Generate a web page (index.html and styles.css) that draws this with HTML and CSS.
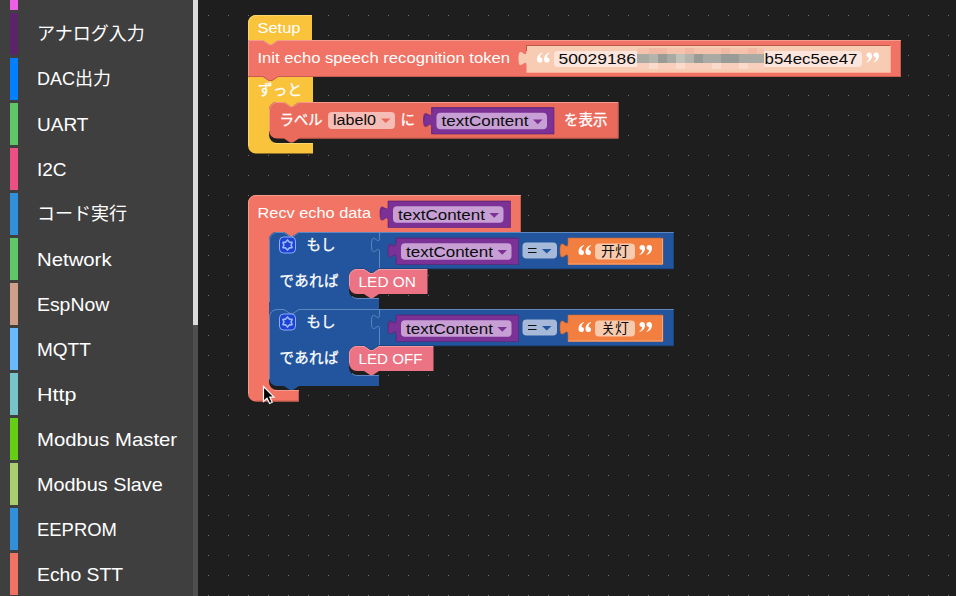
FILE: index.html
```
<!DOCTYPE html>
<html lang="ja">
<head>
<meta charset="utf-8">
<title>Blocks</title>
<link rel="stylesheet" href="styles.css">
</head>
<body>
<div class="app">
  <nav class="toolbox">
    <ul class="categories">
      <li class="cat orchid"></li>
      <li class="cat plum jp"><span>アナログ入力</span></li>
      <li class="cat azure jp"><span>DAC出力</span></li>
      <li class="cat green"><span>UART</span></li>
      <li class="cat rose"><span>I2C</span></li>
      <li class="cat blue jp"><span>コード実行</span></li>
      <li class="cat green wide"><span>Network</span></li>
      <li class="cat tan semi"><span>EspNow</span></li>
      <li class="cat sky"><span>MQTT</span></li>
      <li class="cat teal wider"><span>Http</span></li>
      <li class="cat lime wide"><span>Modbus Master</span></li>
      <li class="cat olive medium"><span>Modbus Slave</span></li>
      <li class="cat blue tight"><span>EEPROM</span></li>
      <li class="cat coral semi"><span>Echo STT</span></li>
    </ul>
    <div class="track"><div class="thumb"></div></div>
  </nav>
  <main class="workspace">
    <svg class="canvas" viewBox="198 0 758 596" width="758" height="596">
      <defs>
        <pattern id="grid" x="208" y="15" width="20" height="20" patternUnits="userSpaceOnUse"><rect width="1" height="1" fill="#707070"/></pattern>
        <g id="var">
          <path class="var-body" d="M0 0H122.500V26.500H0V20c0-10-8 8-8-7.500s8 2.500 8-7.500z"/>
          <path class="edge-light" d="M.5 26.500V20M-7.500 13c0-8 4-5 6-5.500M.5 5V.5H122"/>
          <rect class="var-field" x="5" y="5.300" width="110.500" height="16.500" rx="4"/>
          <text class="dark" x="10" y="18.700" textLength="87" lengthAdjust="spacingAndGlyphs">textContent</text>
          <path class="var-arrow" d="M101.500 12h9.500l-4.750 4.800z"/>
        </g>
        <path id="open-quote" d="M5.500 0C2.200 1 0 3.600 0 6.800 0 9 1.200 10 2.800 10 4.400 10 5.500 9 5.500 7.400 5.500 6 4.500 5 3 5 2.900 3.200 3.800 1.700 5.500.7zM12.500 0C9.200 1 7 3.600 7 6.800 7 9 8.200 10 9.800 10 11.400 10 12.500 9 12.500 7.400 12.500 6 11.500 5 10 5 9.900 3.200 10.800 1.700 12.500.7z"/>
        <g id="condition">
          <path class="if-body" d="M269 8a8 8 0 0 1 8-8H284l6 4h3l6-4H674V36.700H379l-6 4h-3l-6-4H357a8 8 0 0 0-8 8V58.500a8 8 0 0 0 8 8H379V77H299l-6 4h-3l-6-4H277a8 8 0 0 1-8-8z"/>
          <path class="if-light" d="M269.500 70V8a7.500 7.500 0 0 1 7.500-7.500H284l6 4h3l6-4H673.500M379.500 1V5.500c0 10-8-8-8 7.500s8-2.500 8 7.500V36M352 64.500a8 8 0 0 0 5 2H379"/>
          <path class="if-dark" d="M379 36.700H673.500V1"/>
          <rect x="279.500" y="5" width="16" height="16" rx="4" fill="#1d43d3" stroke="#8eadff"/>
          <path d="M287.500 7.900L289.300 10.100 292.100 10.400 291.100 13 292.100 15.600 289.300 15.900 287.500 18.100 285.700 15.900 282.900 15.600 283.900 13 282.900 10.400 285.700 10.100z" fill="none" stroke="#9db9f5" stroke-width="1.600" stroke-linejoin="round"/>
          <text class="label kana" x="306.500" y="18" textLength="29">もし</text>
          <text class="label kana" x="279.500" y="54" textLength="59">であれば</text>
          <use href="#var" x="396" y="6"/>
          <rect x="522.500" y="10.500" width="34.500" height="16" rx="4" fill="#a6b9d9"/>
          <path d="M528 16.500h8.500M528 20.500h8.500" stroke="#111" stroke-width="1.200"/>
          <path d="M542 17h9.500l-4.750 4.600z" fill="#22559d"/>
          <path class="string-body" d="M568 6H663V32.500H568V26c0-10-8 8-8-7.500s8 2.500 8-7.500z"/>
          <path d="M662.500 7V32H568" fill="none" stroke="#f5a77b"/>
          <use href="#open-quote" x="578.500" y="13" fill="#fff"/>
          <rect x="595" y="11.500" width="40" height="16" rx="4" fill="#f8caae"/>
          <use href="#open-quote" transform="translate(652 23) rotate(180)" fill="#fff"/>
        </g>
      </defs>
      <rect x="198" width="758" height="596" fill="url(#grid)"/>

      <g class="setup-stack">
        <path class="loop-body" d="M248 23a8 8 0 0 1 8-8H312V40L278 46H260L248 41z"/>
        <path class="loop-light" d="M248.500 40V23a7.500 7.500 0 0 1 7.500-7.500H311.500"/>
        <path class="loop-body" d="M248 77H313V102H299l-6 4h-3l-6-4H277a8 8 0 0 0-8 8V135a8 8 0 0 0 8 8H313V153.500H256a8 8 0 0 1-8-8z"/>
        <path class="loop-light" d="M248.500 78V146M274 143.500H312.500"/>
        <text class="label kana" x="258" y="94.500" textLength="44">ずっと</text>
        <path class="echo-body" d="M248 40H263l6 4h3l6-4H901V77H278l-6 4h-3l-6-4H248z"/>
        <path class="echo-light" d="M248.500 76V40.500H263l6 4h3l6-4H900.500"/>
        <path class="echo-dark" d="M248 76.500H263l6 4h3l6-4H900.500V41"/>
        <text class="label" x="257.500" y="33" textLength="43" lengthAdjust="spacingAndGlyphs">Setup</text>
        <text class="label" x="257.500" y="63.300" textLength="252.500" lengthAdjust="spacingAndGlyphs">Init echo speech recognition token</text>
        <path d="M526.500 45.500H890.500V72.500H526.500V66c0-10-8 8-8-7.500s8 2.500 8-7.500z" fill="#f8ccb3"/>
        <path d="M526.500 51V45.500H890" fill="none" stroke="#b8574b"/>
        <path d="M526.500 72.500H890.500V46" fill="none" stroke="#fbb09a"/>
        <rect x="554" y="51" width="308" height="16" rx="4" fill="#fbe5dc"/>
        <use href="#open-quote" x="537" y="52.500" fill="#fff"/>
        <use href="#open-quote" transform="translate(879 62.500) rotate(180)" fill="#fff"/>
        <text class="dark" x="558.500" y="64" textLength="77.500" lengthAdjust="spacingAndGlyphs">50029186</text>
        <g class="mosaic">
          <path d="M637 48h127v6H637z" fill="#f5c2ac"/><path d="M649 48h18v6h-18zM685 48h9v6h-9zM721 48h9v6h-9zM748 48h9v6h-9z" fill="#f1b9a4"/>
          <path d="M637 63h127v6H637z" fill="#f7cfbc"/><path d="M649 63h9v6h-9zM676 63h9v6h-9zM712 63h9v6h-9zM739 63h9v6h-9z" fill="#f9dacb"/>
          <path d="M637 54h127v9H637z" fill="#a9aaa4"/><path d="M658 54h9v9h-9zM694 54h9v9h-9zM721 54h18v9h-18z" fill="#999b96"/><path d="M676 54h9v9h-9z" fill="#c3c2ba"/><path d="M685 54h9v9h-9zM649 54h9v9h-9z" fill="#b5b4ac"/>
        </g>
        <text class="dark" x="764.500" y="64" textLength="93" lengthAdjust="spacingAndGlyphs">b54ec5ee47</text>

        <path class="show-body" d="M269 110a8 8 0 0 1 8-8H284l6 4h3l6-4H618.500V138.500H299l-6 4h-3l-6-4H277a8 8 0 0 1-8-8z"/>
        <path class="echo-light" d="M269.500 131V110a7.500 7.500 0 0 1 7.500-7.500H284l6 4h3l6-4H618"/>
        <path class="echo-dark" d="M299 138H618V103"/>
        <text class="label kana" x="279.500" y="125" textLength="43">ラベル</text>
        <rect x="328" y="112" width="67" height="17" rx="4" fill="#f5bdb6"/>
        <text class="dark" x="333" y="125" textLength="43" lengthAdjust="spacingAndGlyphs">label0</text>
        <path d="M381 118.500h9.500l-4.750 4.600z" fill="#e9685b"/>
        <text class="label kana" x="400.500" y="125">に</text>
        <use href="#var" x="431.500" y="107.500"/>
        <text class="label kana" x="564" y="125" textLength="43.500">を表示</text>
      </g>

      <g class="recv-stack">
        <path class="recv-body" d="M248 203a8 8 0 0 1 8-8H521V232H299l-6 4h-3l-6-4H277a8 8 0 0 0-8 8V382a8 8 0 0 0 8 8H299V401.500H256a8 8 0 0 1-8-8z"/>
        <path class="echo-light" d="M248.500 394V203a7.500 7.500 0 0 1 7.500-7.500H520.500M274 390.500H299"/>
        <path class="echo-dark" d="M520.500 196V232M256 401H298.500V391"/>
        <text class="label" x="257.500" y="218" textLength="113.500" lengthAdjust="spacingAndGlyphs">Recv echo data</text>
        <use href="#var" x="388" y="201"/>
        <path class="if-body" d="M269 300H310V320H269z"/>
        <use href="#condition" y="232"/>
        <use href="#condition" y="309"/>
        <text class="dark hanzi" x="601" y="256.300" textLength="28">开灯</text>
        <text class="dark hanzi" x="601" y="333.300" textLength="28">关灯</text>
        <path class="led-body" d="M349 277a8 8 0 0 1 8-8H364l6 4h3l6-4H427.500V294H379l-6 4h-3l-6-4H357a8 8 0 0 1-8-8z"/>
        <path class="led-light" d="M349.500 286V277a7.500 7.500 0 0 1 7.500-7.500H364l6 4h3l6-4H427"/>
        <text class="label" x="358.500" y="287" textLength="57.500" lengthAdjust="spacingAndGlyphs">LED ON</text>
        <path class="led-body" d="M349 354a8 8 0 0 1 8-8H364l6 4h3l6-4H433.500V371H379l-6 4h-3l-6-4H357a8 8 0 0 1-8-8z"/>
        <path class="led-light" d="M349.500 363V354a7.500 7.500 0 0 1 7.500-7.500H364l6 4h3l6-4H433"/>
        <text class="label" x="358.500" y="364" textLength="64" lengthAdjust="spacingAndGlyphs">LED OFF</text>
      </g>
      <path class="cursor" d="M263.500 386.500V401.500L267 398.300L269.600 403.500L272.200 402.300L269.800 397.200H274z"/>
    </svg>
  </main>
</div>
</body>
</html>
```
FILE: styles.css
```
body {
  margin: 0;
  background: #1e1e1e;
  font-family: "Liberation Sans", "Noto Sans CJK JP", sans-serif;
}
.app { display: flex; height: 596px; overflow: hidden; }
.toolbox { display: flex; width: 198px; background: #3f3f3f; overflow: hidden; }
.categories {
  flex: 1;
  margin: -32px 0 0;
  padding: 0 0 0 10px;
  list-style: none;
}
.cat {
  box-sizing: border-box;
  height: 42px;
  margin-bottom: 3px;
  padding-left: 19px;
  border-left: 8px solid;
  font-size: 19px;
  line-height: 43px;
  white-space: nowrap;
  -webkit-text-fill-color: #fff;
}
.cat span { display: inline-block; transform-origin: left; }
.jp { font-size: 18px; line-height: 43px; }
.wide span { transform: scaleX(1.070); }
.wider span { transform: scaleX(1.130); }
.medium span { transform: scaleX(1.045); }
.semi span { transform: scaleX(1.020); }
.tight span { transform: scaleX(.970); }
.orchid { border-color: #ed5fe4; }
.plum { border-color: #5c2468; }
.azure { border-color: #0080ff; }
.green { border-color: #5fc768; }
.rose { border-color: #ec4f83; }
.blue { border-color: #3090dc; }
.tan { border-color: #d09f8a; }
.sky { border-color: #69b9ff; }
.teal { border-color: #78c4cc; }
.lime { border-color: #65ce12; }
.olive { border-color: #a9cf70; }
.coral { border-color: #f07365; }
.track { width: 5px; background: #4e4e4e; }
.thumb { height: 325px; background: #dcdcdc; }
.workspace { flex: 1; background: #1e1e1e; }
.canvas { display: block; }
.label, .dark { font-size: 15.500px; }
.label { fill: #fff; }
.dark { fill: #0c0c0c; font-family: "Liberation Sans", "Noto Sans CJK SC", sans-serif; }
.kana { font-size: 14.500px; stroke: #fff; stroke-width: .3; }
.hanzi { font-size: 14px; }
.loop-body { fill: #f9c33c; }
.loop-light { fill: none; stroke: #fbd56d; }
.echo-body { fill: #f07365; }
.show-body { fill: #ea6a5b; }
.recv-body { fill: #f17464; }
.echo-light { fill: none; stroke: #f59b8d; }
.echo-dark { fill: none; stroke: #c95c50; }
.var-body { fill: #7b3195; stroke: #5d2372; stroke-width: .6; }
.var-field { fill: #c79fd5; }
.var-arrow { fill: #7b3195; }
.edge-light { fill: none; stroke: #6a2883; }
.if-body { fill: #22559d; }
.if-light { fill: none; stroke: #5f88c0; }
.if-dark { fill: none; stroke: #1b4580; }
.string-body { fill: #f27f40; stroke: #c46430; stroke-width: .6; }
.led-body { fill: #ec7384; }
.led-light { fill: none; stroke: #f39aa6; }
.cursor { fill: #000; stroke: #fff; stroke-width: 1.200; }
```
